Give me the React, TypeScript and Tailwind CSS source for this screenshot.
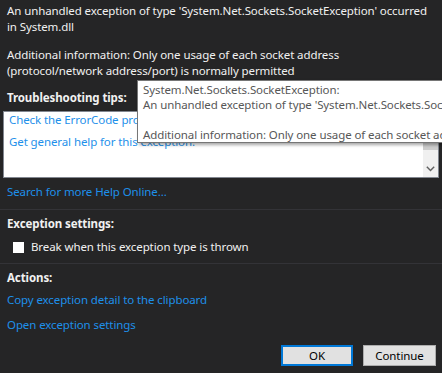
export default function App() {
  return (
    <div
      className="relative w-[442px] h-[373px] overflow-hidden bg-[#252526] text-[#f1f1f1] text-[11.5px] leading-[16px] tracking-[-0.1px]"
      style={{ fontFamily: '"Noto Sans", "Open Sans", sans-serif' }}
    >
      {/* message */}
      <div className="px-[7px] pt-[3px] whitespace-nowrap">
        <p>
          An unhandled exception of type 'System.Net.Sockets.SocketException' occurred
          <br />
          in System.dll
        </p>
        <p className="mt-[12px]">
          Additional information: Only one usage of each socket address
          <br />
          (protocol/network address/port) is normally permitted
        </p>
      </div>

      {/* troubleshooting */}
      <div className="mt-[11px] px-[7px] font-bold">Troubleshooting tips:</div>
      <div className="mt-[5px] mx-[3px] h-[67px] bg-white border border-[#828790] flex">
        <div className="flex-1 px-[5px] whitespace-nowrap overflow-hidden text-[#1e90ea]">
          <div>Check the ErrorCode property of the exception to determine the cause.</div>
          <div className="mt-[6px]">Get general help for this exception.</div>
        </div>
        <div className="w-[15px] bg-[#f0f0f0] flex flex-col">
          <div className="h-[38px] bg-[#cdcdcd]" />
          <div className="flex-1" />
          <div className="h-[16px] flex items-center justify-center">
            <svg width="9" height="6" viewBox="0 0 9 6" fill="none">
              <path d="M0.8 0.8 L4.5 4.6 L8.2 0.8" stroke="#606060" strokeWidth="1.4" />
            </svg>
          </div>
        </div>
      </div>
      <div className="mt-[6px] px-[7px] text-[#1e90ea]">Search for more Help Online...</div>

      <div className="mt-[9px] h-px bg-[#333337]" />

      {/* settings */}
      <div className="mt-[6px] px-[7px] font-bold">Exception settings:</div>
      <div className="mt-[7px] pl-[13px] flex items-center">
        <div className="w-[11px] h-[11px] bg-white" />
        <span className="ml-[7px]">Break when this exception type is thrown</span>
      </div>

      <div className="mt-[8px] h-px bg-[#333337]" />

      {/* actions */}
      <div className="mt-[6px] px-[7px] font-bold">Actions:</div>
      <div className="mt-[6px] px-[7px] text-[#1e90ea]">Copy exception detail to the clipboard</div>
      <div className="mt-[9px] px-[7px] text-[#1e90ea]">Open exception settings</div>

      <div className="mt-[12px] pr-[6px] flex justify-end gap-[10px]">
        <button className="w-[72px] h-[21px] bg-[#e1e1e1] border-2 border-[#0078d7] text-black leading-none">
          OK
        </button>
        <button className="w-[73px] h-[21px] bg-[#e1e1e1] border border-[#adadad] text-black leading-none">
          Continue
        </button>
      </div>

      {/* tooltip */}
      <div className="absolute left-[137px] top-[80px] w-[330px] h-[63px] bg-white border border-[#767676] shadow-[2px_2px_3px_rgba(0,0,0,0.35)] pl-[5px] pt-[1px] text-[#575757] leading-[15px] whitespace-nowrap">
        <div>System.Net.Sockets.SocketException:</div>
        <div>An unhandled exception of type 'System.Net.Sockets.SocketException' occurred in System.dll</div>
        <div>&nbsp;</div>
        <div>Additional information: Only one usage of each socket address (protocol/network address/port)</div>
      </div>
    </div>
  )
}
